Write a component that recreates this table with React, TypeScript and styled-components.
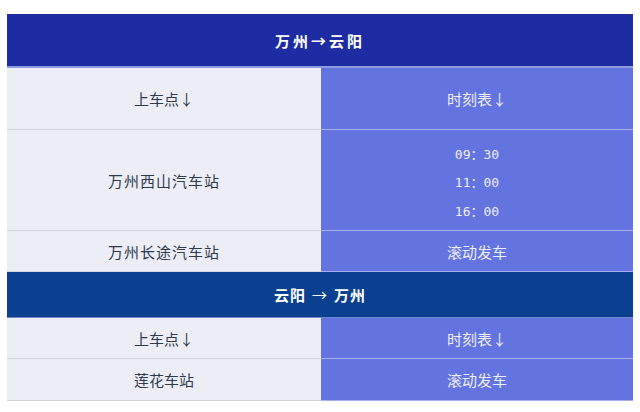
import React from 'react'
import styled, { createGlobalStyle } from 'styled-components'

const GlobalStyle = createGlobalStyle`
  html, body {
    margin: 0;
    padding: 0;
    background: #ffffff;
  }
  body {
    font-family: "Noto Sans CJK SC", "Noto Sans", sans-serif;
  }
`

const Page = styled.div`
  width: 640px;
  height: 412px;
  padding: 14px 7px 0 7px;
  box-sizing: border-box;
`

const Table = styled.div`
  width: 626px;
  display: grid;
  grid-template-columns: 314px 312px;
`

const Banner = styled.div<{ $tone: 'deep' | 'navy'; $h: number }>`
  grid-column: 1 / span 2;
  height: ${(p) => p.$h}px;
  display: flex;
  align-items: center;
  justify-content: center;
  color: #ffffff;
  font-size: 15px;
  font-weight: 700;
  letter-spacing: ${(p) => (p.$tone === 'deep' ? '3px' : '1px')};
  background: ${(p) => (p.$tone === 'deep' ? '#1d2ca3' : '#0b3f8f')};
  box-sizing: border-box;
  border-bottom: ${(p) => (p.$tone === 'deep' ? '2px solid #8e9ce0' : '1px solid #6f86cc')};
`

const Cell = styled.div<{ $side: 'left' | 'right'; $h: number; $wide?: boolean }>`
  height: ${(p) => p.$h}px;
  box-sizing: border-box;
  display: flex;
  flex-direction: column;
  align-items: center;
  justify-content: center;
  font-size: 15px;
  letter-spacing: ${(p) => (p.$wide ? '1px' : '0')};
  background: ${(p) => (p.$side === 'left' ? '#ededf6' : '#6373df')};
  color: ${(p) => (p.$side === 'left' ? '#2c3a4c' : '#eef0ff')};
  border-bottom: 1px solid ${(p) => (p.$side === 'left' ? '#d2d3dd' : '#a7b0ee')};
`

const Times = styled.div`
  display: flex;
  flex-direction: column;
  align-items: center;
  font-family: "DejaVu Sans Mono", "Noto Sans CJK SC", monospace;
  font-size: 13px;
  line-height: 28.5px;
  padding-top: 7px;
`

const Arrow = styled.span`
  margin: 0 6px;
  font-weight: 400;
`

export default function App() {
  return (
    <Page>
      <GlobalStyle />
      <Table>
        <Banner $tone='deep' $h={54}>万州→云阳</Banner>

        <Cell $side='left' $h={62}>上车点↓</Cell>
        <Cell $side='right' $h={62}>时刻表↓</Cell>

        <Cell $side='left' $h={101} $wide>万州西山汽车站</Cell>
        <Cell $side='right' $h={101}>
          <Times>
            <span>09：30</span>
            <span>11：00</span>
            <span>16：00</span>
          </Times>
        </Cell>

        <Cell $side='left' $h={41} $wide>万州长途汽车站</Cell>
        <Cell $side='right' $h={41}>滚动发车</Cell>

        <Banner $tone='navy' $h={46}>
          云阳<Arrow>→</Arrow>万州
        </Banner>

        <Cell $side='left' $h={41}>上车点↓</Cell>
        <Cell $side='right' $h={41}>时刻表↓</Cell>

        <Cell $side='left' $h={42}>莲花车站</Cell>
        <Cell $side='right' $h={42}>滚动发车</Cell>
      </Table>
    </Page>
  )
}
